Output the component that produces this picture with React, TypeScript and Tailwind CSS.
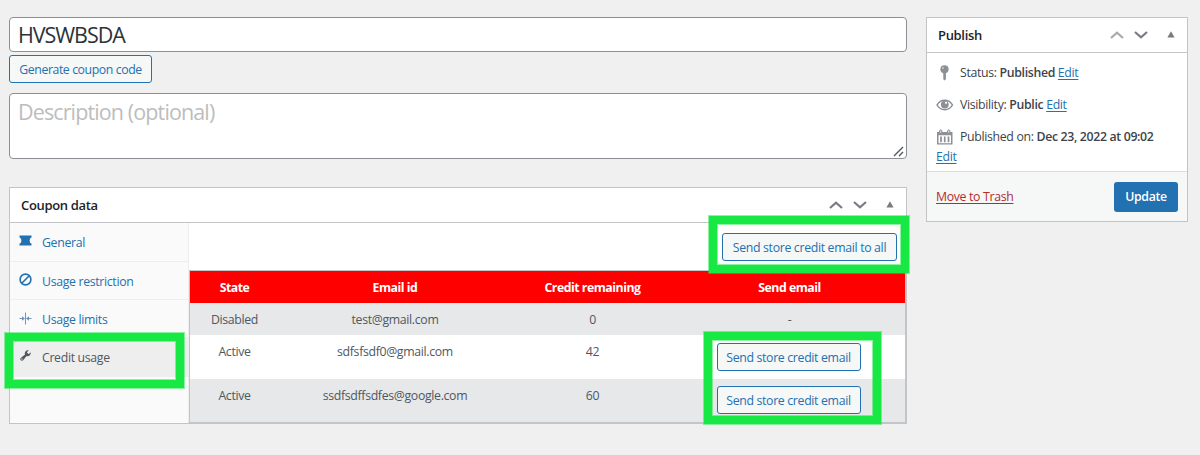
import type { ReactNode } from "react";

const SecondaryButton = ({ children, className = "" }: { children: ReactNode; className?: string }) => (
  <button
    className={`flex h-[28px] shrink-0 items-center justify-center rounded-[3px] border border-[#2271b1] bg-[#f6f7f7] pt-[2px] whitespace-nowrap text-[#2271b1] ${className}`}
  >
    {children}
  </button>
);

const BoxHeader = ({ title, upClass }: { title: string; upClass: string }) => (
  <div className="flex h-[35px] shrink-0 items-center justify-between border-b border-[#c3c4c7] bg-white pl-[11px]">
    <h2 className="text-[13px] font-semibold text-[#1d2327]">{title}</h2>
    <div className="flex items-center pr-[12px] text-[#787c82]">
      <svg width="14" height="8" viewBox="0 0 14 8" className={upClass}>
        <path d="M1 7 L7 1.7 L13 7" fill="none" stroke="currentColor" strokeWidth="2.2" />
      </svg>
      <svg width="14" height="8" viewBox="0 0 14 8" className="ml-[10px]">
        <path d="M1 1 L7 6.3 L13 1" fill="none" stroke="currentColor" strokeWidth="2.2" />
      </svg>
      <svg width="8" height="7" viewBox="0 0 8 7" className="mb-[2px] ml-[19px]">
        <path d="M4 0.3 L7.6 6.5 H0.4 Z" fill="currentColor" />
      </svg>
    </div>
  </div>
);

const TicketIcon = () => (
  <svg width="13" height="11" viewBox="0 0 13 11">
    <path d="M0.5 0.5 H12.5 V2.5 Q10.6 3 10.6 5.5 T12.5 8.5 V10.5 H0.5 V8.5 Q2.4 8 2.4 5.5 T0.5 2.5 Z" fill="#2271b1" />
  </svg>
);

const BlockIcon = () => (
  <svg width="13" height="13" viewBox="0 0 13 13" fill="none" stroke="#2271b1" strokeWidth="1.6">
    <circle cx="6.5" cy="6.5" r="5.4" />
    <path d="M3 10 L10 3" />
  </svg>
);

const LimitIcon = () => (
  <svg width="13" height="13" viewBox="0 0 13 13">
    <path d="M6.5 0.5 V12.5 M0.5 6.5 H5 M8 6.5 H12.5" stroke="#6d95ba" fill="none" />
    <path d="M3 4.2 L6 6.5 L3 8.8 Z M10 4.2 L7 6.5 L10 8.8 Z" fill="#6d95ba" />
  </svg>
);

const WrenchIcon = () => (
  <svg width="13" height="13" viewBox="0 0 20 20">
    <path
      d="M16.68 9.77c-1.34 1.34-3.3 1.67-4.95.99l-5.41 6.52c-.99.99-2.59.99-3.58 0s-.99-2.59 0-3.57l6.52-5.42c-.68-1.65-.35-3.61.99-4.95 1.28-1.28 3.12-1.62 4.72-1.06l-2.89 2.89 2.82 2.82 2.86-2.87c.53 1.58.18 3.39-1.08 4.65zM3.81 16.21c.4.39 1.04.39 1.43 0 .4-.4.4-1.04 0-1.43-.39-.4-1.03-.4-1.43 0-.39.39-.39 1.03 0 1.43z"
      fill="#50575e"
    />
  </svg>
);

const PinIcon = () => (
  <svg width="18" height="16" viewBox="0 0 18 16">
    <circle cx="8.5" cy="4.3" r="4.1" fill="#8c8f94" />
    <path d="M7.2 8 H9.9 V14.2 L8.4 15.6 L7.4 14.6 Z" fill="#8c8f94" />
    <circle cx="7" cy="3" r="1" fill="#c9cacc" />
  </svg>
);

const EyeIcon = () => (
  <svg width="18" height="12" viewBox="0 0 18 12">
    <path d="M1 6 C4.5 -0.4 13 -0.4 16.5 6 C13 12.2 4.5 12.2 1 6 Z" fill="none" stroke="#8c8f94" strokeWidth="1.5" />
    <circle cx="8.8" cy="5.6" r="3.9" fill="#8c8f94" />
    <circle cx="10" cy="3.8" r="1.1" fill="#fff" />
  </svg>
);

const CalendarIcon = () => (
  <svg width="18" height="16" viewBox="0 0 18 16">
    <path d="M1 3 H16.5 V15.5 H1 Z M2.5 6.3 V14.2 H15 V6.3 Z" fill="#8c8f94" fillRule="evenodd" />
    <path d="M5 7.5 V13.2 M8.75 7.5 V13.2 M12.5 7.5 V13.2" stroke="#8c8f94" strokeWidth="1.7" />
    <path d="M3.6 4.4 V1.6 Q4.7 0 5.8 1.6 V4.4 Z M11.6 4.4 V1.6 Q12.7 0 13.8 1.6 V4.4 Z" fill="#d5d6d8" stroke="#8c8f94" strokeWidth="1" />
  </svg>
);

const tabs = [
  { label: "General", icon: <TicketIcon />, cls: "h-[39px] text-[#2271b1]" },
  { label: "Usage restriction", icon: <BlockIcon />, cls: "h-[38px] pt-px text-[#2271b1]" },
  { label: "Usage limits", icon: <LimitIcon />, cls: "h-[38px] pt-[2px] text-[#2271b1]" },
  { label: "Credit usage", icon: <WrenchIcon />, cls: "h-[39px] bg-[#eeeeee] text-[#50575e]" },
];

const rows = [
  { state: "Disabled", email: "test@gmail.com", credit: "0", cls: "h-[32px] bg-[#e7e8ea]", btn: "" },
  { state: "Active", email: "sdfsfsdf0@gmail.com", credit: "42", cls: "h-[44px] bg-white", btn: "" },
  { state: "Active", email: "ssdfsdffsdfes@google.com", credit: "60", cls: "h-[43px] bg-[#e7e8ea]", btn: "-mt-px" },
];

const GRID = "grid grid-cols-[89px_232px_163px_231px] text-center";

const Highlight = ({ className }: { className: string }) => (
  <div className={`pointer-events-none absolute border border-[#17e843]/50 ${className}`}>
    <div className="h-full w-full border-8 border-[#17e843]">
      <div className="h-full w-full border border-[#17e843]/50" />
    </div>
  </div>
);

const Link = ({ children }: { children: ReactNode }) => (
  <a className="text-[#2271b1] underline underline-offset-2">{children}</a>
);

export default function App() {
  return (
    <div className="relative flex h-[455px] w-[1200px] items-start overflow-hidden bg-[#f0f0f1] pt-[17px] pl-[9px] font-['Open_Sans','Noto_Sans',sans-serif] text-[12.3px] leading-[18px] tracking-[-0.33px] text-[#3c434a]">
      <main className="flex w-[898px] flex-col">
        <div className="flex h-[35px] items-center rounded-[4px] border border-[#8c8f94] bg-white px-[8px] pt-px text-[21.5px] text-[#2c3338]">
          <span className="tracking-[-1.05px]">HVSWBSDA</span>
        </div>
        <SecondaryButton className="mt-[3px] w-[143px] tracking-[-0.42px]">Generate coupon code</SecondaryButton>
        <div className="mt-[10px] flex h-[66px] justify-between rounded-[4px] border border-[#8c8f94] bg-white pl-[8px] text-[21.5px] text-[#bdbdbd]">
          <span className="pt-[9px] tracking-[-0.88px]">Description (optional)</span>
          <svg width="12" height="11" viewBox="0 0 12 11" className="mr-px mb-px self-end">
            <path d="M1 10 L10 1 M6 10 L10 6" stroke="#50575e" strokeWidth="1.4" />
          </svg>
        </div>

        <section className="mt-[28px] flex h-[237px] flex-col border border-[#c3c4c7] bg-white">
          <BoxHeader title="Coupon data" upClass="" />
          <div className="flex flex-1">
            <nav className="w-[179px] border-r border-[#eeeeee] bg-[#fafafa]">
              {tabs.map((t) => (
                <div key={t.label} className={`flex items-center border-b border-[#eeeeee] pl-[9px] ${t.cls}`}>
                  <span className="mr-[10px] flex w-[13px] justify-center pb-[3px]">{t.icon}</span>
                  <span className="pt-px">{t.label}</span>
                </div>
              ))}
            </nav>
            <div className="flex w-[717px] flex-col">
              <div className="flex h-[47px] justify-end pt-[10px] pr-[9px]">
                <SecondaryButton className="w-[175px]">Send store credit email to all</SecondaryButton>
              </div>
              <div className="h-[153px] border border-[#c3c4c7]">
                <div className={`${GRID} h-[32px] bg-[#ff0000] pt-[8px] font-bold tracking-[-0.48px] text-white`}>
                  <span>State</span>
                  <span>Email id</span>
                  <span>Credit remaining</span>
                  <span>Send email</span>
                </div>
                {rows.map((r) => (
                  <div key={r.email} className={`${GRID} pt-[8px] text-[#50575e] ${r.cls}`}>
                    <span>{r.state}</span>
                    <span>{r.email}</span>
                    <span>{r.credit}</span>
                    {r.credit === "0" ? (
                      <span>-</span>
                    ) : (
                      <div className="flex justify-center pr-[2px]">
                        <SecondaryButton className={`w-[144px] ${r.btn}`}>Send store credit email</SecondaryButton>
                      </div>
                    )}
                  </div>
                ))}
              </div>
            </div>
          </div>
        </section>
      </main>

      <aside className="ml-[19px] flex h-[205px] w-[262px] flex-col border border-[#c3c4c7] bg-white">
        <BoxHeader title="Publish" upClass="text-[#a7aaad]" />
        <div className="h-[118px] pl-[9px]">
          <div className="flex h-[32px] items-center pt-[7px]">
            <PinIcon />
            <span className="pl-[6px]">Status: <b className="font-semibold">Published</b> <Link>Edit</Link></span>
          </div>
          <div className="flex h-[32px] items-center pt-[7px]">
            <EyeIcon />
            <span className="pl-[6px]">Visibility: <b className="font-semibold">Public</b> <Link>Edit</Link></span>
          </div>
          <div className="flex h-[32px] items-center pt-[7px]">
            <CalendarIcon />
            <span className="pl-[6px]">Published on: <b className="font-semibold">Dec 23, 2022 at 09:02</b></span>
          </div>
          <div className="-mt-px"><Link>Edit</Link></div>
        </div>
        <div className="flex flex-1 items-center justify-between border-t border-[#dcdcde] bg-[#f6f7f7] pr-[9px] pl-[9px]">
          <a className="text-[#b32d2e] underline underline-offset-2">Move to Trash</a>
          <button className="h-[30px] w-[64px] rounded-[3px] bg-[#2271b1] pt-px font-semibold text-white">Update</button>
        </div>
      </aside>

      <Highlight className="top-[215px] left-[708px] h-[59px] w-[202px]" />
      <Highlight className="top-[331px] left-[703px] h-[94px] w-[179px]" />
      <Highlight className="top-[332px] left-[4px] h-[57px] w-[181px]" />
    </div>
  );
}
